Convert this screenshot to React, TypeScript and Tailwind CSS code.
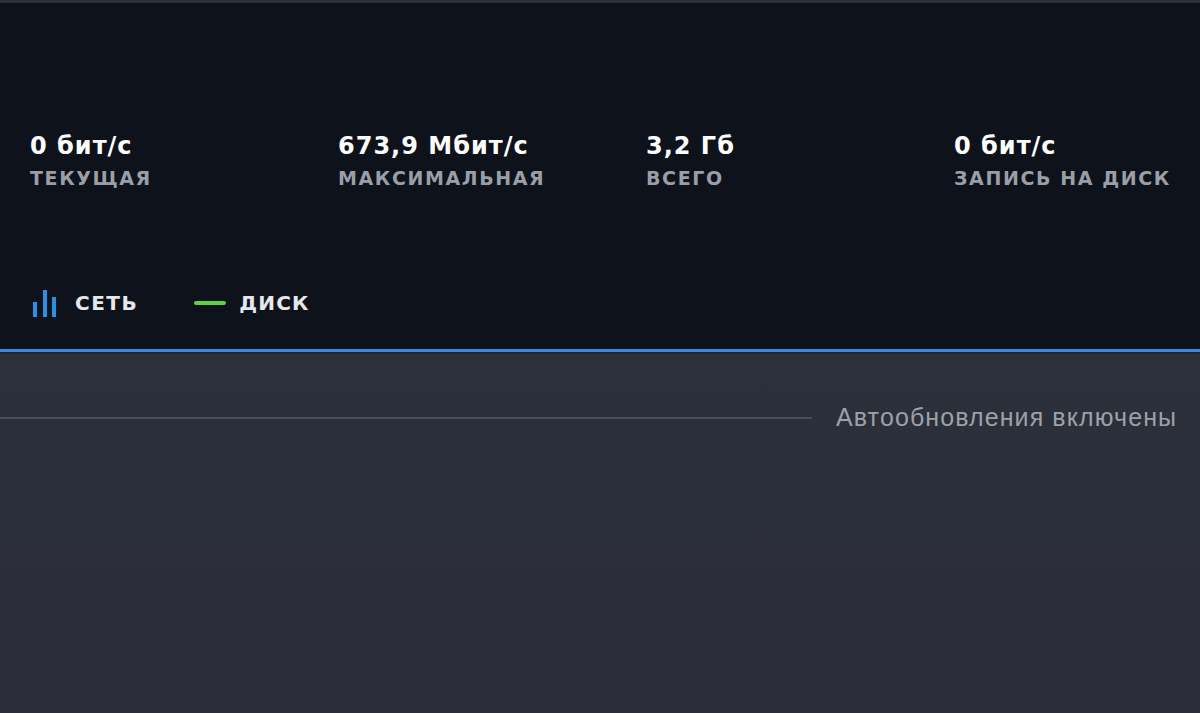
export default function App() {
  const stats = [
    { value: "0 бит/с", label: "Текущая" },
    { value: "673,9 Мбит/с", label: "Максимальная" },
    { value: "3,2 Гб", label: "Всего" },
    { value: "0 бит/с", label: "Запись на диск" },
  ];

  return (
    <div className="flex h-[713px] w-[1200px] flex-col overflow-hidden bg-[#2a2e38] font-['DejaVu_Sans',sans-serif]">
      <div className="h-[3px] bg-[#2c3039]" />
      <div className="flex h-[346px] flex-col bg-[#0d121b]">
        <div className="flex pl-[30px] pt-[128px]">
          {stats.map((s, i) => (
            <div key={i} className="flex w-[308px] shrink-0 flex-col">
              <span className="text-[24px] font-bold leading-[30px] tracking-[1px] text-white">{s.value}</span>
              <span className="text-[19px] font-bold uppercase leading-[34px] tracking-[1.6px] text-[#9a9fa7]">
                {s.label}
              </span>
            </div>
          ))}
        </div>
        <div className="mt-[93px] flex items-center pl-[33px]">
          <svg width="23" height="27" viewBox="0 0 23 27" className="mr-[19px]">
            <rect x="0" y="12" width="4" height="15" fill="#2b8fe5" />
            <rect x="10" y="0" width="4" height="27" fill="#2b8fe5" />
            <rect x="19" y="7" width="4" height="20" fill="#2b8fe5" />
          </svg>
          <span className="text-[20px] font-bold uppercase tracking-[1.5px] text-[#e6e8eb]">Сеть</span>
          <span className="ml-[56px] mr-[13px] h-[4px] w-[32px] rounded-full bg-[#5fd33c]" />
          <span className="text-[20px] font-bold uppercase tracking-[1.2px] text-[#e6e8eb]">Диск</span>
        </div>
      </div>
      <div className="h-[3px] bg-[#2f8ce6]" />
      <div className="h-[2px] bg-[#22242a]" />
      <div className="flex flex-1 flex-col bg-gradient-to-b from-[#2c303a] to-[#2a2d37]">
        <div className="mt-[45px] flex items-center">
          <div className="h-[2px] w-[812px] bg-[#4a4f57]" />
          <span className="ml-[24px] font-['Liberation_Sans',sans-serif] text-[25px] tracking-[1.1px] text-[#9ca1a8]">
            Автообновления включены
          </span>
        </div>
      </div>
    </div>
  );
}
